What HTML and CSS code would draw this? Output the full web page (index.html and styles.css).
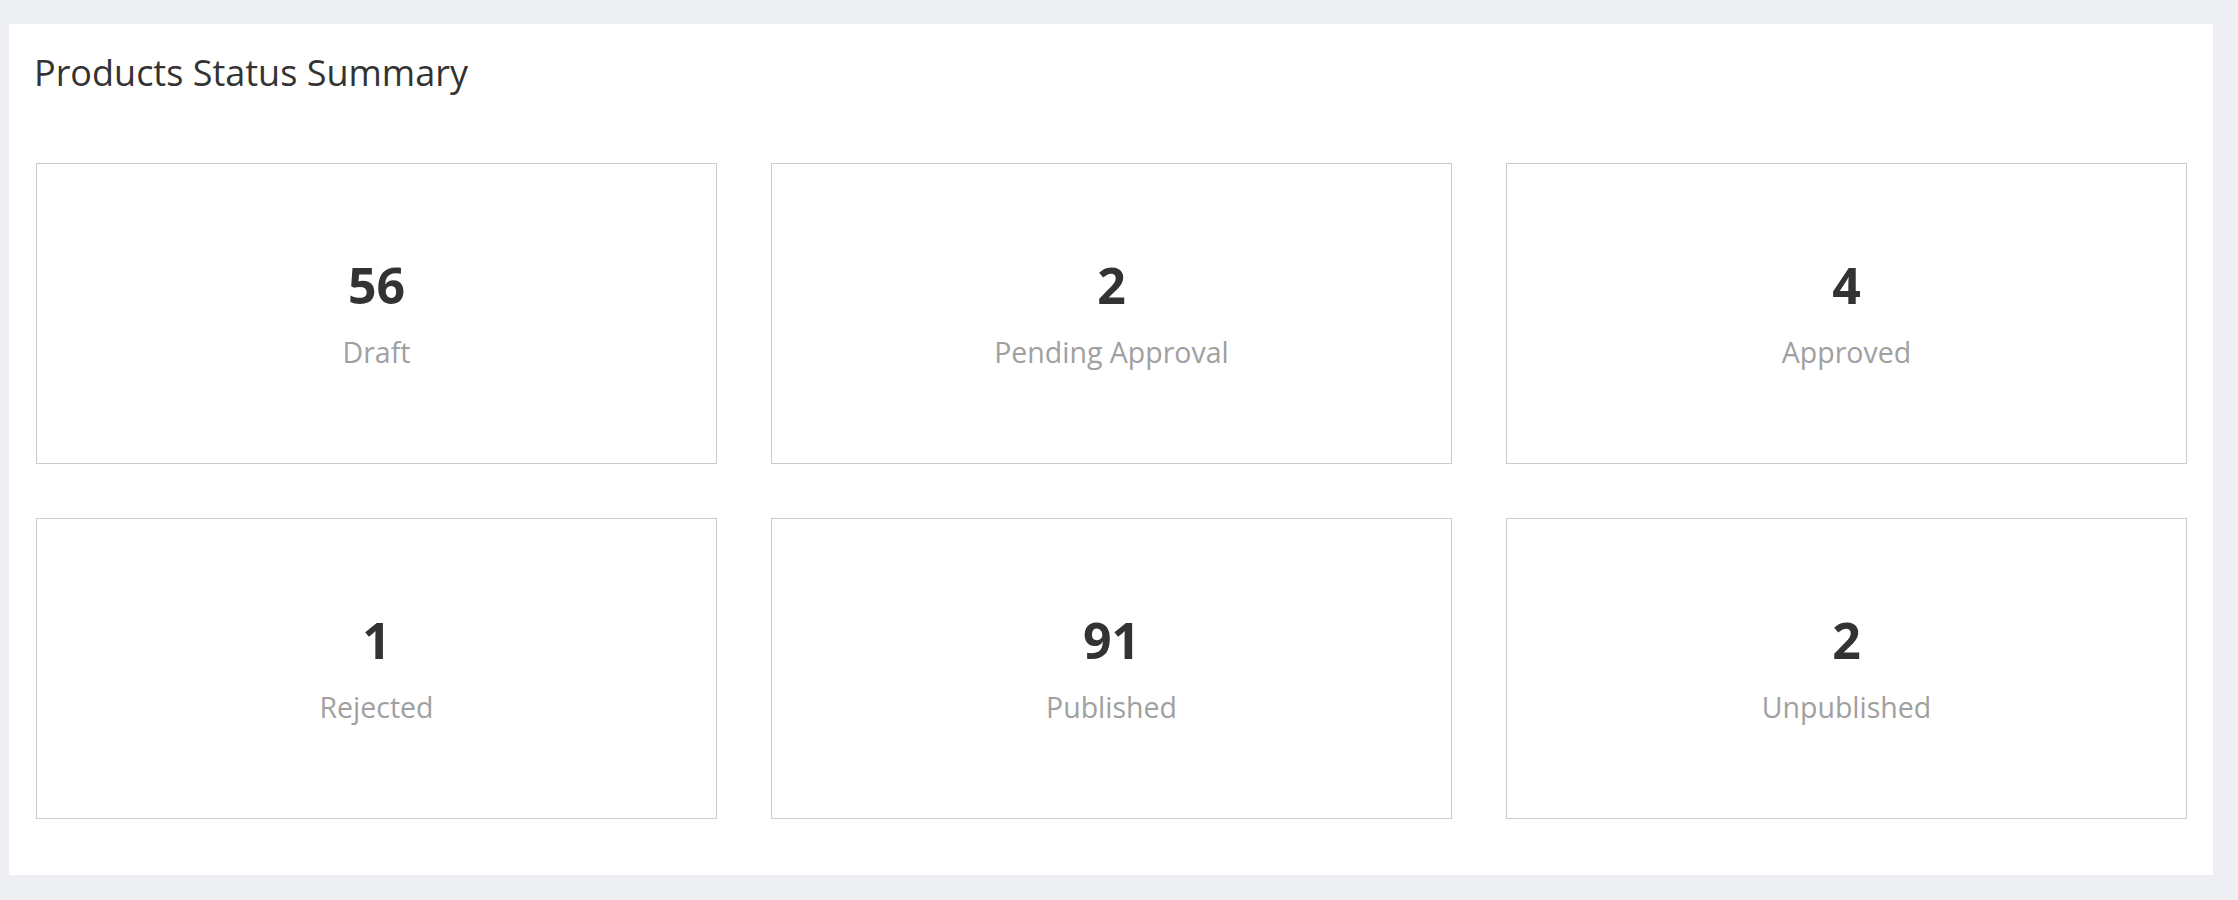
FILE: index.html
```html
<!DOCTYPE html>
<html>
<head>
<meta charset="utf-8">
<link rel="stylesheet" href="styles.css">
</head>
<body>
<section class="panel">
  <h2 class="panel-title">Products Status Summary</h2>
  <div class="stat-grid">
    <div class="stat-card"><div class="stat-value">56</div><div class="stat-label">Draft</div></div>
    <div class="stat-card"><div class="stat-value">2</div><div class="stat-label">Pending Approval</div></div>
    <div class="stat-card"><div class="stat-value">4</div><div class="stat-label">Approved</div></div>
    <div class="stat-card"><div class="stat-value">1</div><div class="stat-label">Rejected</div></div>
    <div class="stat-card"><div class="stat-value">91</div><div class="stat-label">Published</div></div>
    <div class="stat-card"><div class="stat-value">2</div><div class="stat-label">Unpublished</div></div>
  </div>
</section>
</body>
</html>
```

FILE: styles.css
```css
html, body {
  margin: 0;
  padding: 0;
  background: #eeeff3;
  font-family: "Open Sans", "Liberation Sans", sans-serif;
}

body {
  padding: 24px 0 0 9px;
}

.panel {
  box-sizing: border-box;
  width: 2204px;
  height: 851px;
  background: #ffffff;
  padding: 24px 27px 0 27px;
}

.panel-title {
  margin: 0 0 66px -2px;
  font-size: 36px;
  font-weight: 400;
  line-height: normal;
  color: #333333;
}

.stat-grid {
  display: grid;
  grid-template-columns: repeat(3, 681px);
  grid-auto-rows: 301px;
  column-gap: 54px;
  row-gap: 54px;
}

.stat-card {
  box-sizing: border-box;
  border: 1px solid #cccccc;
  padding-top: 87px;
  display: flex;
  flex-direction: column;
  align-items: center;
}

.stat-value {
  font-size: 50px;
  font-weight: 700;
  line-height: normal;
  color: #333333;
}

.stat-label {
  margin-top: 14px;
  font-size: 28.5px;
  font-weight: 400;
  line-height: normal;
  color: #a0a0a0;
}
```
